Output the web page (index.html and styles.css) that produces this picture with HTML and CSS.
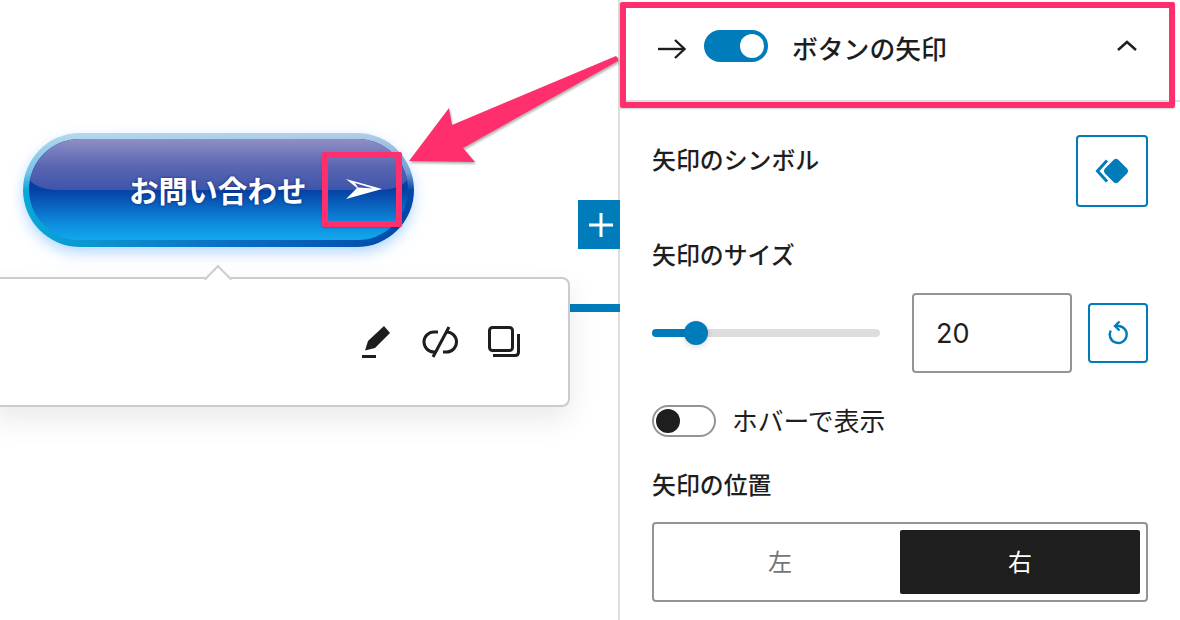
FILE: index.html
```html
<!DOCTYPE html>
<html lang="ja">
<head>
<meta charset="utf-8">
<title>ボタンの矢印</title>
<link rel="stylesheet" href="styles.css">
</head>
<body>
<div class="app">
  <main class="canvas">
    <div class="cta">
      <div class="cta-inner">
        <span class="cta-gloss"></span>
        <span class="cta-label">お問い合わせ</span>
        <svg class="cta-arrow" width="36" height="20" viewBox="0 0 36 20"><path fill="#fff" fill-rule="evenodd" d="M0 0 L36 10 L0 20 L11 9 Z M9 4 L12 8.5 L27 9.5 Z"/></svg>
      </div>
    </div>
    <div class="inserter">
      <svg width="26" height="26" viewBox="0 0 26 26"><path fill="#fff" d="M11.500 1h3v10.500H25v3H14.500V25h-3V14.500H1v-3h10.500z"/></svg>
    </div>
    <div class="blue-line"></div>
    <div class="popover">
      <span class="notch"></span>
      <svg class="tool" width="36" height="36" viewBox="0 0 36 36"><path fill="#1e1e1e" d="M26 2 L32 9 L17 24 L7 26.500 L10 17 Z"/><rect x="4" y="31" width="14" height="3" fill="#1e1e1e"/></svg>
      <svg class="tool" width="36" height="36" viewBox="0 0 36 36" fill="none" stroke="#1e1e1e" stroke-width="3"><path d="M16 8 H12 A10 10 0 0 0 12 28 H14"/><path d="M24 8 H24.500 A10 10 0 0 1 24.500 28 H21"/><path d="M27 3 L11 33"/></svg>
      <svg class="tool" width="36" height="36" viewBox="0 0 36 36" fill="none" stroke="#1e1e1e" stroke-width="3"><rect x="3.500" y="3.500" width="23" height="23" rx="3"/><path d="M32.500 10 V28 Q32.500 31.500 29 31.500 H7"/></svg>
    </div>
  </main>

  <aside class="panel">
    <header class="panel-head">
      <svg class="head-arrow" width="30" height="24" viewBox="0 0 30 24" fill="none" stroke="#1e1e1e" stroke-width="2.400"><path d="M1 12 H27"/><path d="M18 3 L27.500 12 L18 21"/></svg>
      <span class="switch switch-on"><span class="knob"></span></span>
      <h2 class="head-title">ボタンの矢印</h2>
      <svg class="chevron" width="22" height="14" viewBox="0 0 22 14" fill="none" stroke="#1e1e1e" stroke-width="2.500"><path d="M2 11 L11 3 L20 11"/></svg>
    </header>
    <div class="panel-body">
      <div class="symbol-row">
        <span class="label label-symbol">矢印のシンボル</span>
        <button class="symbol-btn" type="button">
          <svg width="36" height="28" viewBox="0 0 36 28"><path fill="none" stroke="#007cba" stroke-width="3" d="M13 3.500 L3.500 14 L13 24.500"/><path fill="#007cba" d="M20 2.500 Q22 1 24 2.500 L33 11.500 Q35 14 33 16.500 L24 25.500 Q22 27 20 25.500 L11 16.500 Q9 14 11 11.500 Z"/></svg>
        </button>
      </div>
      <div class="label label-size">矢印のサイズ</div>
      <div class="size-row">
        <div class="slider"><span class="slider-fill"></span><span class="slider-thumb"></span></div>
        <div class="num-input">20</div>
        <button class="reset-btn" type="button">
          <svg width="24" height="26" viewBox="0 0 24 26" fill="none" stroke="#007cba" stroke-width="2.400"><path d="M9 6 H12 A8.500 8.500 0 1 1 3.700 10.500"/><path d="M12.500 1.500 L8 6 L12.500 10.500"/></svg>
        </button>
      </div>
      <div class="hover-row">
        <span class="switch switch-off"><span class="knob"></span></span>
        <span class="hover-label">ホバーで表示</span>
      </div>
      <div class="label label-pos">矢印の位置</div>
      <div class="segment">
        <span class="seg seg-idle">左</span>
        <span class="seg seg-active">右</span>
      </div>
    </div>
  </aside>

  <svg class="callout-arrow" width="1180" height="620" viewBox="0 0 1180 620"><path class="callout-path" d="M616 56 Q619 58 618 61 L463 148 L475 162 L409 161 L449 108 L452 125 Z"/></svg>
  <div class="mark mark-head"></div>
  <div class="mark mark-icon"></div>
</div>
</body>
</html>
```
FILE: styles.css
```css
* { box-sizing: border-box; }
html, body { margin: 0; padding: 0; background: #fff; }
body {
  font-family: "Noto Sans CJK JP", "Noto Sans", sans-serif;
  color: #1e1e1e;
}
.app {
  position: relative;
  display: flex;
  width: 1180px;
  height: 620px;
  overflow: hidden;
}

/* canvas */
.canvas {
  position: relative;
  width: 618px;
  flex: none;
  padding: 133px 0 0 23px;
}
.cta {
  width: 391px;
  height: 114px;
  padding: 6px;
  border-radius: 57px;
  background:
    linear-gradient(180deg, rgba(210, 228, 242, .85) 0, rgba(190, 215, 240, .6) 35%, rgba(255, 255, 255, 0) 50%),
    linear-gradient(90deg, #0aa8d8 0, #0a72c4 50%, #0048a8 100%);
  box-shadow: 0 6px 14px rgba(110, 180, 255, .5);
}
.cta-inner {
  position: relative;
  display: flex;
  align-items: center;
  gap: 39px;
  height: 101px;
  padding: 0 0 2px 100px;
  border-radius: 51px;
  overflow: hidden;
  background: linear-gradient(180deg, #0640a4 0, #0640a4 50%, #0e8edf 85%, #12a8ee 100%);
}
.cta-gloss {
  position: absolute;
  left: 0;
  right: 0;
  top: 0;
  height: 51px;
  border-radius: 51px 51px 40px 40px / 51px 51px 18px 18px;
  background: linear-gradient(180deg, #8f8fc6 0, #5d67b2 50%, #3d55aa 100%);
}
.cta-label {
  position: relative;
  font-size: 29.500px;
  font-weight: 700;
  line-height: 40px;
  letter-spacing: .1px;
  color: #fff;
  text-shadow: 0 0 3px rgba(0, 20, 90, .7);
  white-space: nowrap;
}
.cta-arrow { position: relative; flex: none; }

.inserter {
  position: absolute;
  left: 578px;
  top: 200px;
  width: 42px;
  height: 49px;
  display: flex;
  align-items: center;
  justify-content: center;
  padding-left: 4px;
  background: #007cba;
}
.blue-line {
  position: absolute;
  left: 560px;
  top: 304px;
  width: 60px;
  height: 8px;
  background: #007cba;
}
.popover {
  position: absolute;
  left: -10px;
  top: 277px;
  width: 580px;
  height: 130px;
  display: flex;
  align-items: center;
  justify-content: flex-end;
  gap: 28px;
  padding-right: 46px;
  background: #fff;
  border: 2px solid #ccc;
  border-radius: 8px;
  box-shadow: 0 12px 30px rgba(0, 0, 0, .09);
}
.notch {
  position: absolute;
  left: 216px;
  top: -10px;
  width: 20px;
  height: 20px;
  background: #fff;
  border-top: 2px solid #ccc;
  border-left: 2px solid #ccc;
  transform: rotate(45deg);
}
.tool { flex: none; }

/* panel */
.panel {
  width: 562px;
  flex: none;
  border-left: 2px solid #ddd;
}
.panel-head {
  display: flex;
  align-items: center;
  height: 102px;
  padding: 0 0 5px 37px;
  border-bottom: 2px solid #ddd;
}
.head-arrow { flex: none; margin-top: 3px; }
.head-title {
  margin: 0 0 0 24px;
  font-size: 25.800px;
  font-weight: 500;
  line-height: 36px;
  white-space: nowrap;
}
.chevron { flex: none; margin: 0 0 4px 169px; }
.switch {
  position: relative;
  display: block;
  flex: none;
  width: 64px;
  height: 32px;
  border-radius: 16px;
}
.switch-on { margin: 0 0 4px 17px; background: #007cba; }
.switch-off { background: #fff; border: 2px solid #949494; }
.knob {
  position: absolute;
  width: 24px;
  height: 24px;
  border-radius: 50%;
}
.switch-on .knob { right: 4px; top: 4px; background: #fff; }
.switch-off .knob { left: 2px; top: 2px; background: #1e1e1e; }

.panel-body { padding: 33px 32px 0; }
.label {
  font-size: 23.900px;
  font-weight: 500;
  line-height: 32px;
  white-space: nowrap;
}
.symbol-row {
  display: flex;
  justify-content: space-between;
  align-items: flex-start;
}
.label-symbol { padding-top: 8px; line-height: 32px; }
.symbol-btn, .reset-btn {
  display: flex;
  align-items: center;
  justify-content: center;
  padding: 0;
  background: #fff;
  border: 2px solid #007cba;
  border-radius: 4px;
}
.symbol-btn { width: 72px; height: 72px; }
.label-size { margin-top: 31px; }
.size-row {
  display: flex;
  align-items: center;
  margin-top: 23px;
  height: 80px;
}
.slider {
  position: relative;
  width: 228px;
  height: 8px;
  border-radius: 4px;
  background: #ddd;
}
.slider-fill {
  position: absolute;
  left: 0;
  top: 0;
  width: 44px;
  height: 8px;
  border-radius: 4px;
  background: #007cba;
}
.slider-thumb {
  position: absolute;
  left: 32px;
  top: -8px;
  width: 24px;
  height: 24px;
  border-radius: 50%;
  background: #007cba;
  box-shadow: 0 2px 6px rgba(0, 0, 0, .15);
}
.num-input {
  width: 160px;
  height: 80px;
  margin-left: 32px;
  padding-left: 22px;
  font-family: "Inter", "Noto Sans", sans-serif;
  font-size: 27px;
  line-height: 77px;
  border: 2px solid #949494;
  border-radius: 4px;
}
.reset-btn { width: 60px; height: 60px; margin-left: 16px; }
.reset-btn svg { margin-left: 1px; }
.hover-row {
  display: flex;
  align-items: center;
  gap: 16px;
  margin-top: 32px;
  height: 32px;
}
.hover-label {
  font-size: 25.800px;
  line-height: 30px;
  padding-bottom: 2px;
  white-space: nowrap;
}
.label-pos { margin-top: 31px; }
.segment {
  display: flex;
  margin-top: 22px;
  height: 80px;
  padding: 6px;
  border: 2px solid #949494;
  border-radius: 4px;
}
.seg {
  flex: 1;
  display: flex;
  align-items: center;
  justify-content: center;
  padding-bottom: 3px;
  font-size: 24px;
  border-radius: 2px;
}
.seg-idle { color: #757575; }
.seg-active { color: #fff; background: #1e1e1e; }

/* annotations */
.callout-arrow {
  position: absolute;
  left: 0;
  top: 0;
  pointer-events: none;
}
.callout-path {
  fill: #fe2f6c;
  filter: drop-shadow(1px 2px 1px rgba(0, 0, 0, .3));
}
.mark {
  position: absolute;
  border: 6px solid #fe2f6c;
  border-radius: 2px;
  box-shadow: 0 1px 2px rgba(0, 0, 0, .2);
}
.mark-head { left: 620px; top: 2px; width: 555px; height: 106px; }
.mark-icon { left: 322px; top: 152px; width: 80px; height: 75px; }
```
